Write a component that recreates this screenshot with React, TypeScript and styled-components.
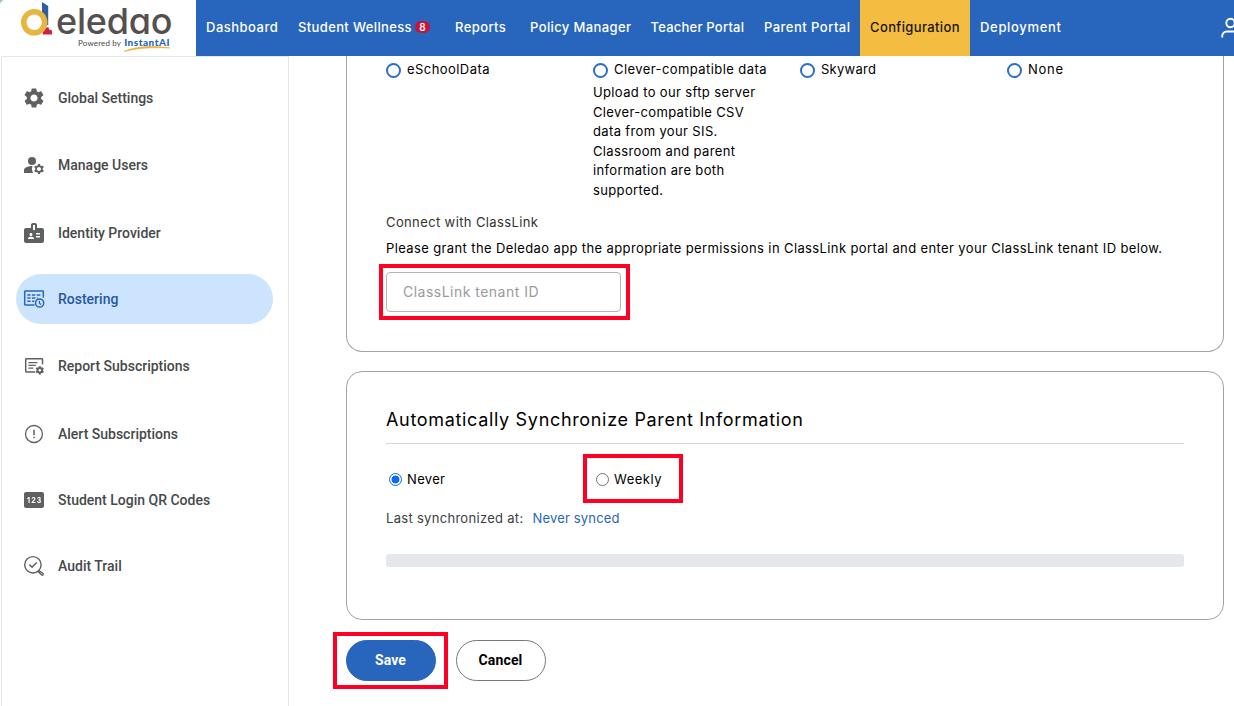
import React, { useState } from "react";
import styled, { createGlobalStyle, css } from "styled-components";
import { MdSettings, MdManageAccounts, MdBadge, MdPin } from "react-icons/md";

const colors = {
  blue: "#2866be",
  yellow: "#f4bd42",
  badge: "#cb1236",
  pill: "#cce4fd",
  pillText: "#27599b",
  icon: "#5f6061",
  sideText: "#47494b",
  line: "#e2e8ee",
  card: "#a3a3a3",
  callout: "#ff0024",
};

const GlobalStyle = createGlobalStyle`
  *, *::before, *::after { box-sizing: border-box; }
  html, body { margin: 0; padding: 0; background: #fff; overflow: hidden; }
  body { font-family: Inter, "Liberation Sans", sans-serif; font-size: 13px; color: #000; }
`;

const Page = styled.div`
  display: flex;
  flex-direction: column;
  width: 1234px;
  height: 706px;
  overflow: hidden;
`;

const Header = styled.header`
  display: flex;
  height: 56px;
  flex: none;
`;

const LogoArea = styled.div`
  width: 196px;
  display: flex;
  padding-left: 20px;
  background: radial-gradient(circle at 7px 7px, #fff 7px, #9cc4c6 8.5px) 0 0 / 6px 6px no-repeat;
`;

const LogoMark = styled.svg`
  width: 36px;
  height: 40px;
  flex: none;
`;

const LogoWords = styled.div`
  display: flex;
  flex-direction: column;
  width: 118px;
`;

const Wordmark = styled.div`
  height: 37px;
  line-height: 42px;
  font-size: 36px;
  font-weight: 500;
  letter-spacing: -0.2px;
  color: #55504f;
  font-feature-settings: "cv11";
  white-space: nowrap;
`;

const Tagline = styled.div`
  display: flex;
  align-items: baseline;
  gap: 3px;
  height: 10px;
  line-height: 10px;
  padding-left: 22px;
  font-family: Lato, sans-serif;
  font-size: 8px;
  letter-spacing: 0.16px;
  color: #4c4848;
  white-space: nowrap;
`;

const TaglineBrand = styled.b`
  font-size: 10px;
  font-weight: 900;
  letter-spacing: 0.5px;
  color: ${colors.blue};
`;

const Swoosh = styled.svg`
  width: 48px;
  height: 7px;
  margin: -2px 0 0 67px;
`;

const Nav = styled.nav`
  display: flex;
  flex: 1;
  background: ${colors.blue};
  overflow: hidden;
`;

const NavItem = styled.a<{ $width: number; $track: number; $active?: boolean }>`
  width: ${(p) => p.$width}px;
  flex: none;
  display: flex;
  align-items: center;
  gap: 3px;
  padding: 0 0 3px 10px;
  font-weight: 500;
  letter-spacing: ${(p) => p.$track}px;
  white-space: nowrap;
  color: ${(p) => (p.$active ? "#1a1508" : "#fff")};
  background: ${(p) => (p.$active ? colors.yellow : "transparent")};
`;

const CountBadge = styled.span`
  width: 15px;
  height: 12px;
  border-radius: 6px;
  background: ${colors.badge};
  font-size: 10px;
  font-weight: 600;
  line-height: 12px;
  letter-spacing: 0;
  text-align: center;
`;

const Account = styled.div`
  display: flex;
  align-items: center;
  width: 13px;
  margin-left: auto;
  overflow: hidden;

  svg {
    flex: none;
  }
`;

const Body = styled.div`
  display: flex;
  flex: 1;
`;

const Sidebar = styled.aside`
  width: 288px;
  margin-left: 1px;
  padding: 16px 15px 0 14px;
  border: 1px solid ${colors.line};
  border-bottom: none;
`;

const SideItem = styled.a<{ $gap: number; $active?: boolean }>`
  display: flex;
  align-items: center;
  gap: 12px;
  height: 50px;
  margin-bottom: ${(p) => p.$gap}px;
  padding-left: 6px;
  border-radius: 25px;
  font: 500 14px Roboto, sans-serif;
  color: ${(p) => (p.$active ? colors.pillText : colors.sideText)};
  background: ${(p) => (p.$active ? colors.pill : "transparent")};
  white-space: nowrap;

  svg {
    flex: none;
    width: 24px;
    height: 24px;
    color: ${(p) => (p.$active ? colors.blue : colors.icon)};
  }
`;

const Main = styled.main`
  display: flex;
  flex-direction: column;
  width: 878px;
  margin-left: 57px;
`;

const Card = styled.section<{ $scrolled?: boolean }>`
  border: 1px solid ${colors.card};
  border-radius: 16px;
  padding: 0 39px;
  ${(p) =>
    p.$scrolled
      ? css`
          height: 296px;
          border-top: none;
          border-top-left-radius: 0;
          border-top-right-radius: 0;
          margin-bottom: 19px;
        `
      : css`
          height: 249px;
          margin-bottom: 20px;
        `}
`;

const OptionGrid = styled.div<{ $top: number }>`
  display: grid;
  grid-template-columns: repeat(3, 207px) 177px;
  margin-top: ${(p) => p.$top}px;
`;

const Option = styled.label<{ $track: number; $native?: boolean }>`
  position: relative;
  display: flex;
  align-items: center;
  justify-self: start;
  gap: ${(p) => (p.$native ? 5 : 6)}px;
  height: 18px;
  padding-left: ${(p) => (p.$native ? 3 : 0)}px;
  letter-spacing: ${(p) => p.$track}px;
  white-space: nowrap;
`;

const Ring = styled.input`
  appearance: none;
  width: 15px;
  height: 15px;
  margin: 2px 0 0;
  border: 2px solid #2c6fc8;
  border-radius: 50%;
`;

const Radio = styled.input`
  appearance: none;
  width: 13px;
  height: 13px;
  margin: 0;
  border: 1px solid #767676;
  border-radius: 50%;

  &:checked {
    border: 1.5px solid #0a68ff;
    background: radial-gradient(circle, #0a68ff 3.6px, #fff 4.3px);
  }
`;

const Description = styled.p`
  width: 172px;
  margin: 5px 0 0;
  line-height: 19.5px;
  letter-spacing: 0.36px;
`;

const Subheading = styled.div`
  margin-top: 13px;
  line-height: 18px;
  letter-spacing: 0.38px;
  color: #333;
`;

const Note = styled.p`
  margin: 8px 0 15px;
  line-height: 18px;
  letter-spacing: 0.383px;
  white-space: nowrap;
`;

const Callout = styled.span<{ $inset: string }>`
  position: absolute;
  inset: ${(p) => p.$inset};
  border: 4px solid ${colors.callout};
  pointer-events: none;
`;

const Anchor = styled.div`
  position: relative;
  display: flex;
  width: max-content;
`;

const TextField = styled.input`
  width: 235px;
  height: 40px;
  padding: 0 16px 1px;
  border: 1px solid #b5b5b5;
  border-radius: 4px;
  outline: none;
  font: 14px Inter, sans-serif;
  letter-spacing: 0.48px;

  &::placeholder {
    color: #9b9b9b;
    opacity: 1;
  }
`;

const Title = styled.h2`
  margin: 36px 0 0;
  height: 36px;
  line-height: 24px;
  border-bottom: 1px solid #d6d6d6;
  font-size: 18px;
  font-weight: 400;
  letter-spacing: 0.67px;
  white-space: nowrap;
`;

const SyncStatus = styled.div`
  display: flex;
  gap: 9px;
  margin-top: 21px;
  line-height: 18px;
  letter-spacing: 0.3px;
  color: #3b4045;
`;

const SyncValue = styled.span`
  color: ${colors.blue};
  letter-spacing: 0.17px;
`;

const ProgressTrack = styled.div`
  height: 13px;
  margin-top: 27px;
  border-radius: 3px;
  background: #e4e8eb;
`;

const Actions = styled.div`
  display: flex;
  gap: 20px;
`;

const Button = styled.button<{ $primary?: boolean }>`
  width: 90px;
  height: 41px;
  padding: 0 1px 1px 0;
  border-radius: 21px;
  border: 1px solid ${(p) => (p.$primary ? colors.blue : "#777")};
  background: ${(p) => (p.$primary ? colors.blue : "#fff")};
  color: ${(p) => (p.$primary ? "#fff" : "#000")};
  font: 700 14px Roboto, sans-serif;
  letter-spacing: 0.15px;
`;

const RosterIcon = () => (
  <svg viewBox="0 0 24 24" fill="none" stroke="currentColor" strokeWidth="1.5">
    <path d="M12.6 18H3.3a.6.6 0 0 1-.6-.6V4.600a.6.6 0 0 1 .6-.6h17.400a.6.6 0 0 1 .6.6v6" />
    <path d="M5.300 8h3.200M9.900 8h3.500M14.800 8h3.600M5.300 11.100h3.200M9.900 11.100h3.500M5.300 14.200h3.200M9.900 14.200h2.300M14.800 11.100h.8" />
    <circle cx="17.600" cy="16" r="4.100" />
    <path d="M17.400 13.700v2.600l1.700 1.300" strokeWidth="1.200" />
  </svg>
);

const ReportIcon = () => (
  <svg viewBox="0 0 24 24" fill="none" stroke="currentColor" strokeWidth="1.5">
    <path d="M13.200 18H4.400a.7.7 0 0 1-.7-.7V5.500a.7.7 0 0 1 .7-.7h15.400a.7.7 0 0 1 .7.7v4.800" />
    <path d="M6.400 8.600h9M6.400 11.400h7.500M6.400 14.200h5" strokeWidth="1.300" />
    <circle cx="17.800" cy="16.300" r="2.300" strokeWidth="2" />
    <path
      d="M17.800 12.200v1.600M17.800 18.800v1.600M14.200 14.200l1.400.8M20 17.600l1.400.8M14.200 18.400l1.400-.8M20 15l1.400-.8"
      strokeWidth="2"
    />
  </svg>
);

const AlertIcon = () => (
  <svg viewBox="0 0 24 24" fill="none" stroke="currentColor" strokeWidth="1.300">
    <circle cx="12" cy="12" r="8.500" />
    <path d="M12 7.800v5.400M12 14.800v1.500" strokeWidth="1.500" />
  </svg>
);

const AuditIcon = () => (
  <svg viewBox="0 0 24 24" fill="none" stroke="currentColor" strokeWidth="1.400">
    <circle cx="10.900" cy="10.800" r="8.200" />
    <path d="M7.400 10.600l2.700 2.600 4.600-4.700" strokeWidth="1.500" />
    <path d="M17 16.600l-.9 1 3.600 3.300c.5.400 1 .4 1.400 0 .4-.5.400-1 0-1.400z" strokeWidth="1.300" />
  </svg>
);

const navItems = [
  { label: "Dashboard", width: 92, track: 0.5 },
  { label: "Student Wellness", width: 157, track: 0.37, count: 8 },
  { label: "Reports", width: 75, track: 0.42 },
  { label: "Policy Manager", width: 120.5, track: 0.383 },
  { label: "Teacher Portal", width: 113.5, track: 0.225 },
  { label: "Parent Portal", width: 106, track: 0.475 },
  { label: "Configuration", width: 110, track: 0.371, active: true },
  { label: "Deployment", width: 101, track: 0.685 },
];

const sideItems = [
  { label: "Global Settings", icon: <MdSettings />, gap: 17 },
  { label: "Manage Users", icon: <MdManageAccounts />, gap: 18 },
  { label: "Identity Provider", icon: <MdBadge />, gap: 16 },
  { label: "Rostering", icon: <RosterIcon />, gap: 17, active: true },
  { label: "Report Subscriptions", icon: <ReportIcon />, gap: 18 },
  { label: "Alert Subscriptions", icon: <AlertIcon />, gap: 16 },
  { label: "Student Login QR Codes", icon: <MdPin />, gap: 16 },
  { label: "Audit Trail", icon: <AuditIcon />, gap: 0 },
];

export default function App() {
  const [sync, setSync] = useState("never");

  return (
    <Page>
      <GlobalStyle />
      <Header>
        <LogoArea>
          <LogoMark viewBox="0 0 36 40">
            <path d="M22 2l6.200 4v19H22z" fill="#2d5e9f" />
            <path d="M32 34.500H23l-1-5 6.200-2.500 1 2.500 2.800 1z" fill="#cf2140" />
            <circle cx="14.200" cy="22.300" r="10.500" fill="#fff" stroke="#e8b53f" strokeWidth="5.600" />
          </LogoMark>
          <LogoWords>
            <Wordmark>eledao</Wordmark>
            <Tagline>
              Powered by <TaglineBrand>InstantAI</TaglineBrand>
            </Tagline>
            <Swoosh viewBox="0 0 48 7">
              <path d="M1 6.500C12 1.500 28 .3 47 3 28 2 14 3.200 1 6.500z" fill="#eab23b" stroke="#eab23b" strokeWidth=".6" />
            </Swoosh>
          </LogoWords>
        </LogoArea>
        <Nav>
          {navItems.map((item) => (
            <NavItem key={item.label} $width={item.width} $track={item.track} $active={item.active}>
              {item.label}
              {item.count && <CountBadge>{item.count}</CountBadge>}
            </NavItem>
          ))}
          <Account>
            <svg width="20" height="24" viewBox="0 0 20 24" fill="none" stroke="#fff" strokeWidth="1.900">
              <circle cx="9.500" cy="7" r="4.200" />
              <path d="M1.200 21.500v-1.500a4.500 4.500 0 0 1 4.500-4.500h7.600a4.500 4.500 0 0 1 4.500 4.500v1.500" />
            </svg>
          </Account>
        </Nav>
      </Header>
      <Body>
        <Sidebar>
          {sideItems.map((item) => (
            <SideItem key={item.label} $gap={item.gap} $active={item.active}>
              {item.icon}
              {item.label}
            </SideItem>
          ))}
        </Sidebar>
        <Main>
          <Card $scrolled>
            <OptionGrid $top={4}>
              <Option $track={0.443}>
                <Ring type="radio" name="source" />
                eSchoolData
              </Option>
              <div>
                <Option $track={0.425}>
                  <Ring type="radio" name="source" />
                  Clever-compatible data
                </Option>
                <Description>
                  Upload to our sftp server Clever-compatible CSV data from your SIS. Classroom and parent
                  information are both supported.
                </Description>
              </div>
              <Option $track={0.274}>
                <Ring type="radio" name="source" />
                Skyward
              </Option>
              <Option $track={0.717}>
                <Ring type="radio" name="source" />
                None
              </Option>
            </OptionGrid>
            <Subheading>Connect with ClassLink</Subheading>
            <Note>
              Please grant the Deledao app the appropriate permissions in ClassLink portal and enter your
              ClassLink tenant ID below.
            </Note>
            <Anchor>
              <TextField placeholder="ClassLink tenant ID" />
              <Callout $inset="-8px -9px -8px -7px" />
            </Anchor>
          </Card>
          <Card>
            <Title>Automatically Synchronize Parent Information</Title>
            <OptionGrid $top={26}>
              <Option $track={0.339} $native>
                <Radio type="radio" checked={sync === "never"} onChange={() => setSync("never")} />
                Never
              </Option>
              <Option $track={0.5} $native>
                <Radio type="radio" checked={sync === "weekly"} onChange={() => setSync("weekly")} />
                Weekly
                <Callout $inset="-16px -21px -15px -10px" />
              </Option>
            </OptionGrid>
            <SyncStatus>
              Last synchronized at: <SyncValue>Never synced</SyncValue>
            </SyncStatus>
            <ProgressTrack />
          </Card>
          <Actions>
            <Anchor>
              <Button $primary>Save</Button>
              <Callout $inset="-8px -12px -8px -13px" />
            </Anchor>
            <Button>Cancel</Button>
          </Actions>
        </Main>
      </Body>
    </Page>
  );
}
